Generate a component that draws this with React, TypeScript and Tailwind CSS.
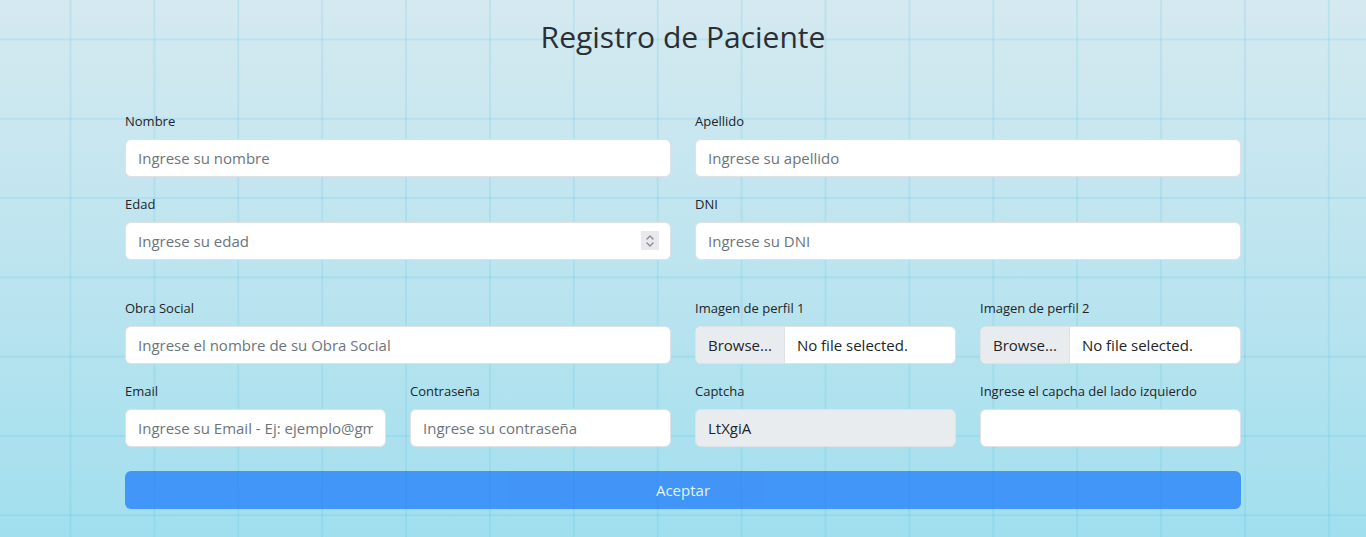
import React from "react";

const font = "font-['Open_Sans',sans-serif]";

function Label({ children }: { children: React.ReactNode }) {
  return <label className="block text-[13px] leading-[21px] pt-px mb-[7px] text-[#212529]">{children}</label>;
}

function TextInput({ placeholder }: { placeholder: string }) {
  return (
    <input
      type="text"
      placeholder={placeholder}
      className="block w-full h-[38px] px-3 rounded-md border border-[#dee2e6] bg-white text-[15px] text-[#212529] placeholder:text-[#6c757d] outline-none"
    />
  );
}

function FileInput() {
  return (
    <div className="flex h-[38px] w-full rounded-md border border-[#dee2e6] bg-white overflow-hidden text-[15px] text-[#212529]">
      <div className="flex items-center px-3 bg-[#e9ecef] border-r border-[#dee2e6]">Browse...</div>
      <div className="flex items-center px-3">No file selected.</div>
    </div>
  );
}

export default function App() {
  return (
    <div className={`relative min-h-[537px] w-full bg-gradient-to-b from-[#d5e9f0] to-[#a1dfee] ${font}`}>
      <div className="absolute inset-0 pointer-events-none bg-[linear-gradient(to_right,rgba(60,185,220,0.15)_1.5px,transparent_1.5px),linear-gradient(to_bottom,rgba(60,185,220,0.15)_1.5px,transparent_1.5px)] bg-size-[83.9px_79.3px] bg-position-[69.5px_38.5px]" />
      <div className="relative mx-auto max-w-[1140px] px-3 pt-[18px]">
        <h2 className="text-center text-[30px] leading-[38px] text-[#2b2f33]">Registro de Paciente</h2>
        <form className="mt-[54px]">
          <div className="grid grid-cols-2 gap-x-6">
            <div className="mb-4">
              <Label>Nombre</Label>
              <TextInput placeholder="Ingrese su nombre" />
            </div>
            <div className="mb-4">
              <Label>Apellido</Label>
              <TextInput placeholder="Ingrese su apellido" />
            </div>
            <div className="mb-4">
              <Label>Edad</Label>
              <div className="relative">
                <TextInput placeholder="Ingrese su edad" />
                <div className="absolute right-[12px] top-[9px] w-[18px] h-[19px] bg-[#e9e9ed] flex items-center justify-center">
                  <svg width="10" height="14" viewBox="0 0 10 14" fill="none" stroke="#8a8a92" strokeWidth="1.4" strokeLinecap="round" strokeLinejoin="round">
                    <path d="M2 5 L5 2 L8 5" />
                    <path d="M2 9 L5 12 L8 9" />
                  </svg>
                </div>
              </div>
            </div>
            <div className="mb-4">
              <Label>DNI</Label>
              <TextInput placeholder="Ingrese su DNI" />
            </div>
          </div>
          <div className="h-[21px]" />
          <div className="grid grid-cols-4 gap-x-6">
            <div className="col-span-2 mb-4">
              <Label>Obra Social</Label>
              <TextInput placeholder="Ingrese el nombre de su Obra Social" />
            </div>
            <div className="mb-4">
              <Label>Imagen de perfil 1</Label>
              <FileInput />
            </div>
            <div className="mb-4">
              <Label>Imagen de perfil 2</Label>
              <FileInput />
            </div>
            <div>
              <Label>Email</Label>
              <TextInput placeholder="Ingrese su Email - Ej: ejemplo@gmail.com" />
            </div>
            <div>
              <Label>Contraseña</Label>
              <TextInput placeholder="Ingrese su contraseña" />
            </div>
            <div>
              <Label>Captcha</Label>
              <div className="flex items-center h-[38px] px-3 rounded-md border border-[#dee2e6] bg-[#e9ecef] text-[15px] text-[#212529]">LtXgiA</div>
            </div>
            <div>
              <Label>Ingrese el capcha del lado izquierdo</Label>
              <TextInput placeholder="" />
            </div>
          </div>
          <button
            type="button"
            className="mt-6 w-full h-[38px] rounded-md bg-[#0d6efd] opacity-65 text-white text-[15px]"
          >
            Aceptar
          </button>
        </form>
      </div>
    </div>
  );
}
